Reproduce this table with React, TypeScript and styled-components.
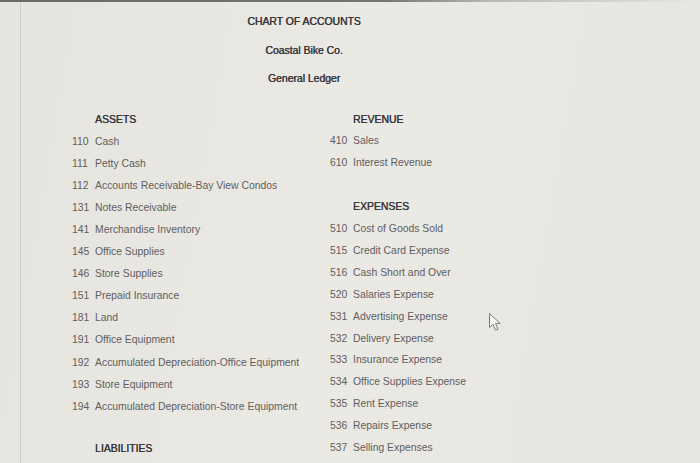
import React from 'react'
import styled, { createGlobalStyle } from 'styled-components'

const GlobalStyle = createGlobalStyle`
  html, body {
    margin: 0;
    padding: 0;
    background: #e8e6e1;
  }
  body {
    font-family: 'Liberation Sans', Arial, sans-serif;
  }
`

type Account = { code: string; name: string }

const assets: Account[] = [
  { code: '110', name: 'Cash' },
  { code: '111', name: 'Petty Cash' },
  { code: '112', name: 'Accounts Receivable-Bay View Condos' },
  { code: '131', name: 'Notes Receivable' },
  { code: '141', name: 'Merchandise Inventory' },
  { code: '145', name: 'Office Supplies' },
  { code: '146', name: 'Store Supplies' },
  { code: '151', name: 'Prepaid Insurance' },
  { code: '181', name: 'Land' },
  { code: '191', name: 'Office Equipment' },
  { code: '192', name: 'Accumulated Depreciation-Office Equipment' },
  { code: '193', name: 'Store Equipment' },
  { code: '194', name: 'Accumulated Depreciation-Store Equipment' },
]

const revenue: Account[] = [
  { code: '410', name: 'Sales' },
  { code: '610', name: 'Interest Revenue' },
]

const expenses: Account[] = [
  { code: '510', name: 'Cost of Goods Sold' },
  { code: '515', name: 'Credit Card Expense' },
  { code: '516', name: 'Cash Short and Over' },
  { code: '520', name: 'Salaries Expense' },
  { code: '531', name: 'Advertising Expense' },
  { code: '532', name: 'Delivery Expense' },
  { code: '533', name: 'Insurance Expense' },
  { code: '534', name: 'Office Supplies Expense' },
  { code: '535', name: 'Rent Expense' },
  { code: '536', name: 'Repairs Expense' },
  { code: '537', name: 'Selling Expenses' },
]

function Section({ title, items, gap = 0 }: { title: string; items: Account[]; gap?: number }) {
  return (
    <Group $gap={gap}>
      <Heading>{title}</Heading>
      {items.map((a) => (
        <Row key={a.code}>
          <Code>{a.code}</Code>
          <Name>{a.name}</Name>
        </Row>
      ))}
    </Group>
  )
}

export default function App() {
  return (
    <Page>
      <GlobalStyle />
      <TopBar />
      <Sheet>
        <Header>
          <Title>CHART OF ACCOUNTS</Title>
          <Title>Coastal Bike Co.</Title>
          <Title>General Ledger</Title>
        </Header>
        <Columns>
          <Column $step={22.1}>
            <Section title="ASSETS" items={assets} />
            <Section title="LIABILITIES" items={[]} gap={20} />
          </Column>
          <Column $step={21.9}>
            <Section title="REVENUE" items={revenue} />
            <Section title="EXPENSES" items={expenses} gap={21.9} />
          </Column>
        </Columns>
      </Sheet>
      <Pointer width="15" height="20" viewBox="0 0 15 20">
        <path
          d="M1.5 1.5 L1.5 15.5 L5 12.3 L7.6 18.2 L10 17.1 L7.5 11.4 L12.2 11.4 Z"
          fill="#f6f5f2"
          stroke="#7a7a7a"
          strokeWidth="1"
          strokeLinejoin="round"
        />
      </Pointer>
    </Page>
  )
}

const Page = styled.div`
  position: relative;
  width: 700px;
  height: 463px;
  overflow: hidden;
  background: linear-gradient(100deg, #e6e4df 0%, #ebe9e4 50%, #e7e5e0 100%);
  display: flex;
  flex-direction: column;
`

const TopBar = styled.div`
  height: 2px;
  flex: none;
  background: linear-gradient(90deg, #6a6966 0%, #757470 55%, #b9b8b4 70%, rgba(0, 0, 0, 0) 100%);
`

const Sheet = styled.div`
  flex: 1;
  margin-left: 20px;
  border-left: 1px solid #cfcdc8;
`

const Header = styled.header`
  width: 566px;
  padding-top: 6px;
  display: flex;
  flex-direction: column;
  align-items: center;
`

const Title = styled.div`
  font-size: 10.4px;
  line-height: 28.5px;
  color: #36363a;
  text-shadow: 0.35px 0 0 #36363a;
`

const Columns = styled.div`
  margin-top: 15px;
  padding-left: 51px;
  display: grid;
  grid-template-columns: 258px 1fr;
`

const Column = styled.div<{ $step: number }>`
  --step: ${(p) => p.$step}px;
  display: flex;
  flex-direction: column;
`

const Group = styled.div<{ $gap: number }>`
  margin-top: ${(p) => p.$gap}px;
  display: flex;
  flex-direction: column;
`

const Heading = styled.div`
  padding-left: 23px;
  font-size: 10.4px;
  line-height: var(--step);
  color: #36363a;
  text-shadow: 0.35px 0 0 #36363a;
`

const Row = styled.div`
  display: flex;
  font-size: 10.4px;
  line-height: var(--step);
  color: #5e5e60;
`

const Code = styled.span`
  width: 23px;
  flex: none;
`

const Name = styled.span`
  white-space: nowrap;
`

const Pointer = styled.svg`
  position: absolute;
  left: 488px;
  top: 312px;
`
